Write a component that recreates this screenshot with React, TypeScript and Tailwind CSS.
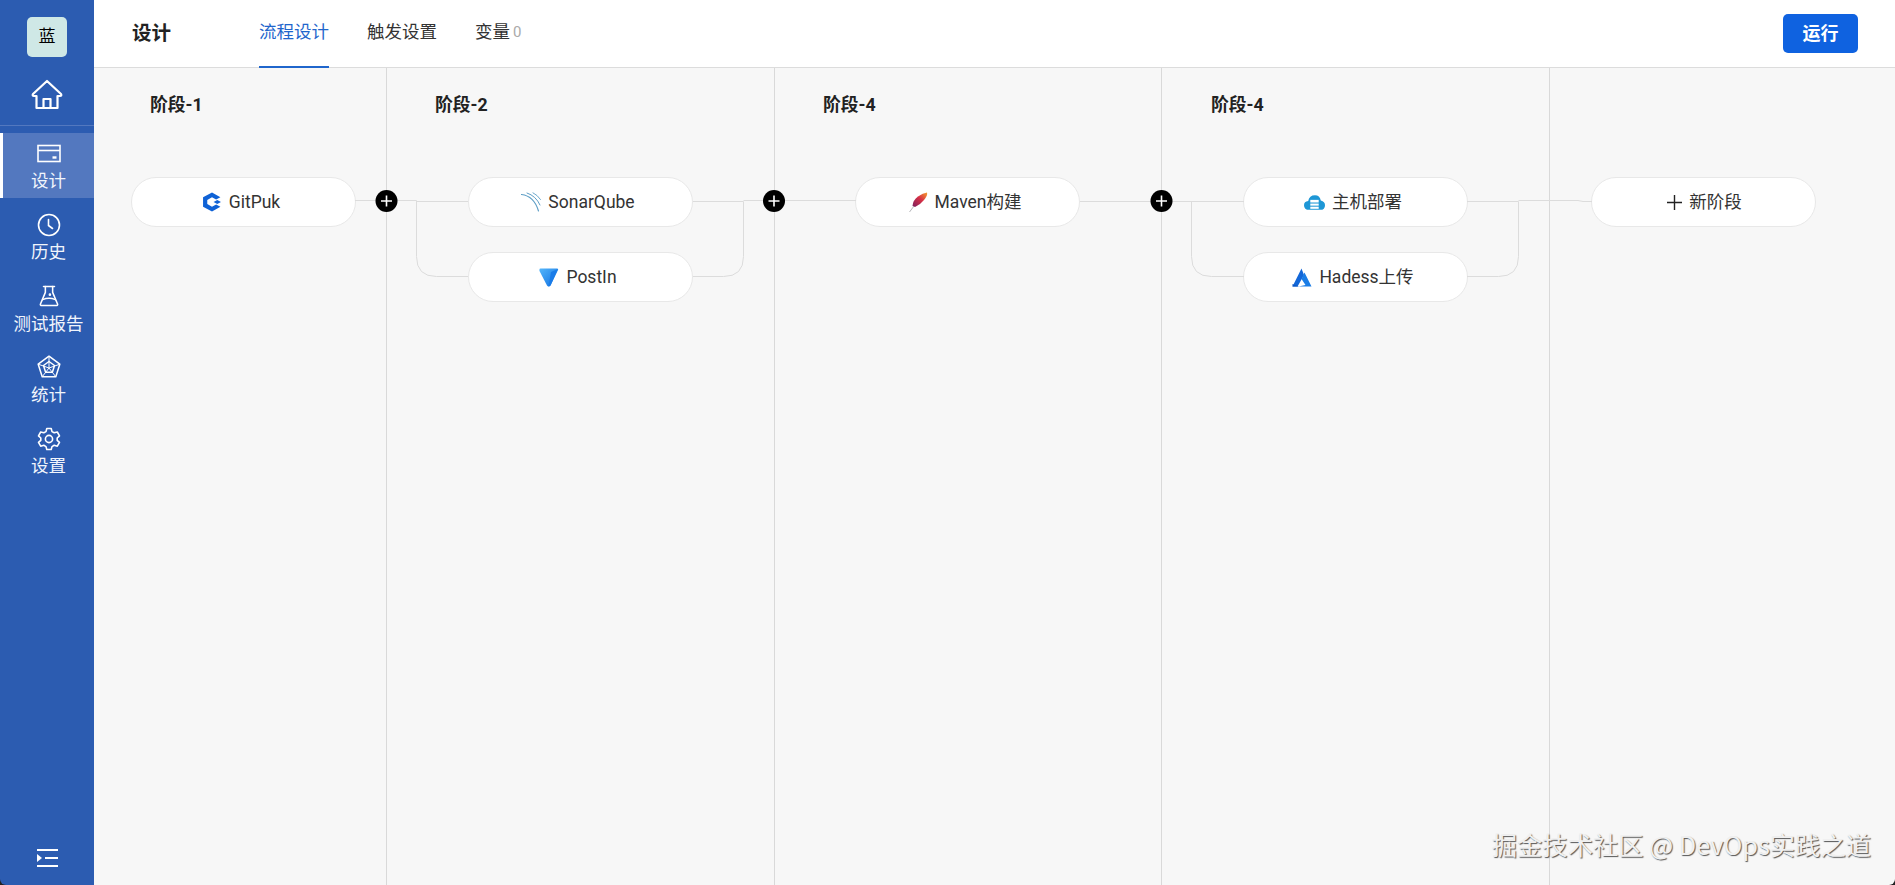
import { ReactNode } from "react";

const FONT = "font-['Roboto','Noto_Sans_CJK_SC',sans-serif]";

function HomeIcon() {
  return (
    <svg width="32" height="32" viewBox="0 0 32 32" fill="none" stroke="white" strokeWidth="2.2" strokeLinejoin="round" strokeLinecap="round">
      <path d="M16 2 L30 15 Q31 17 29 17 L26.5 17 L26.5 29 L5.5 29 L5.5 17 L3 17 Q1 17 2 15 Z" />
      <path d="M12.5 29 L12.5 20 L19.5 20 L19.5 29" />
    </svg>
  );
}

function CardIcon() {
  return (
    <svg width="24" height="20" viewBox="0 0 24 20" fill="none" stroke="white" strokeWidth="1.6">
      <rect x="1" y="1.5" width="22" height="16" />
      <path d="M1 6.5 H23" />
      <path d="M15.5 13.5 H19.5" strokeWidth="2.4" />
    </svg>
  );
}

function ClockIcon() {
  return (
    <svg width="24" height="24" viewBox="0 0 24 24" fill="none" stroke="white" strokeWidth="1.6" strokeLinecap="round">
      <circle cx="12" cy="12" r="10.5" />
      <path d="M11.5 6.5 V12.5 L15.5 15.5" />
    </svg>
  );
}

function FlaskIcon() {
  return (
    <svg width="20" height="22" viewBox="0 0 22 24" fill="none" stroke="white" strokeWidth="1.7" strokeLinejoin="round" strokeLinecap="round">
      <path d="M5 1.5 H17" />
      <path d="M7 1.5 V8 L1.5 21 Q1.3 22.5 3 22.5 H19 Q20.7 22.5 20.5 21 L15 8 V1.5" />
      <path d="M4 16 Q11 13 18 16" />
      <circle cx="12" cy="10.5" r="0.6" />
    </svg>
  );
}

function RadarIcon() {
  return (
    <svg width="24" height="24" viewBox="0 0 24 24" fill="none" stroke="white" strokeWidth="1.5" strokeLinejoin="round">
      <path d="M12 1.2 L22.8 9.2 L18.8 21.8 H5.2 L1.2 9.2 Z" />
      <path d="M12 6.5 L17.5 10.5 L15.4 17.2 H8.6 L6.5 10.5 Z" />
      <path d="M12 1.5 V13 M22.5 9.3 L12 13 M18.6 21.5 L12 13 M5.4 21.5 L12 13 M1.5 9.3 L12 13" strokeWidth="1" />
    </svg>
  );
}

function GearIcon() {
  return (
    <svg width="24" height="24" viewBox="0 0 24 24" fill="none" stroke="white" strokeWidth="1.6" strokeLinejoin="round">
      <path d="M9.8 1.5 H14.2 L15 4.6 L17.2 5.8 L20.3 5 L22.5 8.8 L20.2 11 V13.4 L22.5 15.4 L20.3 19.2 L17.2 18.3 L15 19.6 L14.2 22.5 H9.8 L9 19.6 L6.8 18.3 L3.7 19.2 L1.5 15.4 L3.8 13.4 V11 L1.5 8.8 L3.7 5 L6.8 5.8 L9 4.6 Z" />
      <circle cx="12" cy="12" r="3.6" />
    </svg>
  );
}

function CollapseIcon() {
  return (
    <svg width="21" height="18" viewBox="0 0 21 18" fill="white">
      <rect x="0" y="0" width="21" height="2" />
      <rect x="8" y="8" width="13" height="2" />
      <rect x="0" y="16" width="21" height="2" />
      <path d="M0 5 L5 9 L0 13 Z" />
    </svg>
  );
}

function GitPukIcon() {
  return (
    <svg width="20" height="20" viewBox="0 0 19 19">
      <path fill="#0f62d6" d="M9.5 0.5 L17.5 5 L13.4 7.2 L9.5 5 L5 7.6 V11.4 L9.5 14 L13.4 11.8 L17.5 14 L9.5 18.5 L1 14 V5 Z" />
      <path fill="#0f62d6" d="M11 9.5 L14.5 7.6 L18 9.5 L14.5 11.4 Z" />
    </svg>
  );
}

function SonarIcon() {
  return (
    <svg width="20" height="20" viewBox="0 0 20 20" fill="none" stroke="#5f9fc6" strokeLinecap="round">
      <path d="M0.5 2.5 Q13 4 17.5 19" strokeWidth="1.2" />
      <path d="M6 1 Q15 4 19 13" strokeWidth="1" />
      <path d="M12 0.8 Q16.5 3 19.5 7.5" strokeWidth="0.9" />
    </svg>
  );
}

function PostInIcon() {
  return (
    <svg width="20" height="19" viewBox="0 0 20 19">
      <defs>
        <linearGradient id="postin" x1="0" y1="0" x2="1" y2="1">
          <stop offset="0" stopColor="#54b6fb" />
          <stop offset="1" stopColor="#0f6ee0" />
        </linearGradient>
      </defs>
      <path fill="url(#postin)" d="M1.5 0.5 H18 Q19.5 0.5 19 2 L11.5 17.5 Q9.5 19.5 8 17.5 L0.5 3 Q0 0.5 1.5 0.5 Z" />
      <path fill="#1a7ce8" d="M19 1 L11.5 17.5 Q10.5 18.5 9.5 18.5 L12 4 Z" />
    </svg>
  );
}

function FeatherIcon() {
  return (
    <svg width="19" height="21" viewBox="0 0 19 21">
      <defs>
        <linearGradient id="maven" x1="0" y1="1" x2="1" y2="0">
          <stop offset="0" stopColor="#7b1f5f" />
          <stop offset="0.55" stopColor="#d62f45" />
          <stop offset="1" stopColor="#f6a02d" />
        </linearGradient>
      </defs>
      <path fill="url(#maven)" d="M18 0.5 Q19 3 15 8 Q11 13 6 15 L3.5 14 Q4 8 9 4.5 Q14 1 18 0.5 Z" />
      <path stroke="#a3a3a8" strokeWidth="0.8" fill="none" d="M0.5 20 L5 14" />
    </svg>
  );
}

function CloudIcon() {
  return (
    <svg width="21" height="17" viewBox="0 0 20 16">
      <path fill="#1e97d6" d="M5 15 Q0 15 0 10.5 Q0 7 4 6.5 Q5 1 10.5 1 Q15 1 16 6 Q20 7 20 10.5 Q20 15 15.5 15 Z" />
      <rect x="6" y="5.5" width="8" height="2.5" fill="white" />
      <rect x="6" y="9" width="8" height="2" fill="white" />
      <rect x="6" y="12" width="8" height="2" fill="white" />
    </svg>
  );
}

function AzureIcon() {
  return (
    <svg width="20" height="19" viewBox="0 0 20 19">
      <path fill="#1367d8" d="M9.5 0.5 L12 7 L5.5 18.5 H0.5 Z" />
      <path fill="#1a7de6" d="M12.5 4.5 L19.5 18.5 H6.5 L13.5 17 L9.5 11 Z" />
      <path fill="#0d58c4" d="M0.5 16 L7 18.5 H0.5 Z" />
    </svg>
  );
}

function NewIcon() {
  return (
    <svg className="ml-[7px]" width="15" height="15" viewBox="0 0 15 15" stroke="#222" strokeWidth="1.4">
      <path d="M7.5 0 V15 M0 7.5 H15" />
    </svg>
  );
}

function NavItem({ icon, label, active = false }: { icon: ReactNode; label: string; active?: boolean }) {
  return (
    <div
      className={
        active
          ? "flex h-[65px] flex-col items-center border-l-[3px] border-white bg-[#5378bf] pt-[7px]"
          : "flex h-[65px] flex-col items-center pl-[3px] pt-[7px]"
      }
    >
      <div className="flex h-[27px] items-center justify-center">{icon}</div>
      <span className="text-[17.5px] leading-[28px] text-[#f1f5fc]">{label}</span>
    </div>
  );
}

function Sidebar() {
  return (
    <aside className="flex w-[94px] shrink-0 flex-col bg-[#2c5cb1]">
      <div className="flex h-[67px] items-end justify-center pb-[10px]">
        <div className="flex h-[40px] w-[40px] items-center justify-center rounded-[5px] bg-[#cfe8e6] text-[17px] text-black">
          蓝
        </div>
      </div>
      <div className="flex h-[59px] items-start justify-center border-b border-[#5378bf] pt-[12px]">
        <HomeIcon />
      </div>
      <div className="mt-[7px] flex flex-col gap-[6.3px]">
        <NavItem icon={<CardIcon />} label="设计" active />
        <NavItem icon={<ClockIcon />} label="历史" />
        <NavItem icon={<FlaskIcon />} label="测试报告" />
        <NavItem icon={<RadarIcon />} label="统计" />
        <NavItem icon={<GearIcon />} label="设置" />
      </div>
      <div className="mt-auto flex justify-center pb-[18px]">
        <CollapseIcon />
      </div>
    </aside>
  );
}

function Tab({ label, active = false, count }: { label: string; active?: boolean; count?: number }) {
  return (
    <div
      className={
        active
          ? "flex h-[68px] items-center border-b-[2px] border-[#1f66cc] text-[17.5px] text-[#1f66cc]"
          : "flex h-[68px] items-center border-b-[2px] border-transparent text-[17.5px] text-[#333]"
      }
    >
      {label}
      {count !== undefined && <span className="ml-[3px] text-[15px] text-[#aaa]">{count}</span>}
    </div>
  );
}

function Header() {
  return (
    <header className="flex h-[68px] shrink-0 items-center border-b border-[#dcdcdc] bg-white pl-[38px] pr-[37px]">
      <div className="w-[127px] pt-[1px] text-[19.5px] font-bold text-[#222]">设计</div>
      <nav className="flex gap-[38px]">
        <Tab label="流程设计" active />
        <Tab label="触发设置" />
        <Tab label="变量" count={0} />
      </nav>
      <button className="ml-auto flex h-[39px] w-[75px] items-center justify-center rounded-[5px] bg-[#0f62e0] text-[18px] font-bold text-white">
        运行
      </button>
    </header>
  );
}

function TaskNode({ icon, label }: { icon: ReactNode; label: string }) {
  return (
    <div className="flex h-[50px] w-[225px] items-center justify-center gap-[7px] rounded-full border border-[#e8e8e8] bg-white pr-[5px] text-[17.5px] text-[#333]">
      {icon}
      <span>{label}</span>
    </div>
  );
}

function Stage({
  title,
  className,
  titleClass,
  nodeClass,
  children,
}: {
  title?: string;
  className: string;
  titleClass: string;
  nodeClass: string;
  children: ReactNode;
}) {
  return (
    <section className={className}>
      <div className={titleClass}>{title}</div>
      <div className={nodeClass}>{children}</div>
    </section>
  );
}

function Plus({ cx }: { cx: number }) {
  return (
    <g>
      <circle cx={cx} cy="201" r="11" fill="#000" />
      <path d={`M${cx - 5.5} 201 H${cx + 5.5} M${cx} 195.5 V206.5`} stroke="white" strokeWidth="1.6" />
    </g>
  );
}

function Connectors() {
  return (
    <svg
      className="pointer-events-none absolute inset-0 h-full w-full"
      viewBox="94 68 1801 817"
      preserveAspectRatio="xMinYMin slice"
      fill="none"
    >
      <g stroke="#dcdcdc" strokeWidth="1">
        <path d="M355 200.5 H416.5 V256.5 Q416.5 276.5 436.5 276.5 H468" />
        <path d="M416.5 201.5 H468" />
        <path d="M693 201.5 H743.5 V256.5 Q743.5 276.5 723.5 276.5 H693" />
        <path d="M743.5 200.5 H774 H856" />
        <path d="M1080 201.5 H1161 H1244" />
        <path d="M1191.5 201.5 V256.5 Q1191.5 276.5 1211.5 276.5 H1244" />
        <path d="M1467 201.5 H1518.5 V256.5 Q1518.5 276.5 1498.5 276.5 H1467" />
        <path d="M1518.5 200.5 H1578 L1583 201.5 H1592" />
      </g>
      <Plus cx={386.5} />
      <Plus cx={774} />
      <Plus cx={1161.5} />
    </svg>
  );
}

const titleStyle = "mt-[25px] h-[24px] text-[17.75px] font-bold leading-[24px] text-[#222]";

function Canvas() {
  return (
    <div className="relative flex flex-1 overflow-hidden bg-[#f7f7f7]">
      <Stage
        title="阶段-1"
        className="w-[293px] shrink-0 border-r border-[#d9d9d9]"
        titleClass={`${titleStyle} pl-[56px]`}
        nodeClass="mt-[60px] flex flex-col gap-[25px] pl-[37px]"
      >
        <TaskNode icon={<GitPukIcon />} label="GitPuk" />
      </Stage>
      <Stage
        title="阶段-2"
        className="w-[388px] shrink-0 border-r border-[#d9d9d9]"
        titleClass={`${titleStyle} pl-[48px]`}
        nodeClass="mt-[60px] flex flex-col gap-[25px] pl-[81px]"
      >
        <TaskNode icon={<SonarIcon />} label="SonarQube" />
        <TaskNode icon={<PostInIcon />} label="PostIn" />
      </Stage>
      <Stage
        title="阶段-4"
        className="w-[387px] shrink-0 border-r border-[#d9d9d9]"
        titleClass={`${titleStyle} pl-[48px]`}
        nodeClass="mt-[60px] flex flex-col gap-[25px] pl-[80px]"
      >
        <TaskNode icon={<FeatherIcon />} label="Maven构建" />
      </Stage>
      <Stage
        title="阶段-4"
        className="w-[388px] shrink-0 border-r border-[#d9d9d9]"
        titleClass={`${titleStyle} pl-[49px]`}
        nodeClass="mt-[60px] flex flex-col gap-[25px] pl-[81px]"
      >
        <TaskNode icon={<CloudIcon />} label="主机部署" />
        <TaskNode icon={<AzureIcon />} label="Hadess上传" />
      </Stage>
      <Stage
        className="flex-1"
        titleClass={titleStyle}
        nodeClass="mt-[60px] flex flex-col gap-[25px] pl-[41px]"
      >
        <TaskNode icon={<NewIcon />} label="新阶段" />
      </Stage>
      <Connectors />
      <div className="absolute bottom-[25px] right-[24px] font-['Noto_Sans_CJK_SC',sans-serif] text-[25.3px] leading-[32px] text-[#f0f0f0] [text-shadow:1px_1px_1px_#555]">
        掘金技术社区 @ DevOps实践之道
      </div>
    </div>
  );
}

export default function App() {
  return (
    <div className="h-[885px] bg-[#222]">
      <div className={`flex h-[885px] overflow-hidden rounded-b-[6px] ${FONT}`}>
        <Sidebar />
        <main className="flex min-w-0 flex-1 flex-col">
          <Header />
          <Canvas />
        </main>
      </div>
    </div>
  );
}
